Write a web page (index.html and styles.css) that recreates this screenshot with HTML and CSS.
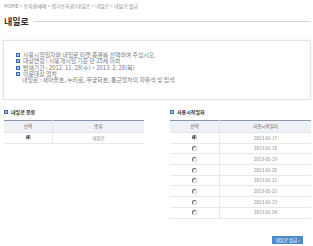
FILE: index.html
```html
<!DOCTYPE html>
<html>
	<head>
		<meta charset="utf-8">
		<link rel="stylesheet" href="styles.css">
	</head>
	<body>
		<div class="page">
			<div class="breadcrumb">HOME &gt; 승차권예매 &gt; 정기승차권/내일로 &gt; 내일로 &gt; 내일로 발급</div>

			<div class="title">
				<h1>내일로</h1>
				<div class="title-line"></div>
			</div>

			<div class="notice">
				<ul>
					<li><i class="mark"></i>사용시작일자와 내일로 티켓 종류를 선택하여 주십시오.</li>
					<li><i class="mark"></i>대상연령 : 사용개시일 기준 만 25세 이하</li>
					<li><i class="mark"></i>발매기간 : 2012. 11. 28(수) ~ 2013. 2. 28(목)</li>
					<li><i class="mark"></i>이용대상 열차</li>
					<li class="sub">내일로 : 새마을호, 누리로, 무궁화호, 통근열차의 자유석 및 입석</li>
				</ul>
			</div>

			<div class="sections">
				<div class="section left">
					<h2><i class="mark"></i>내일로 종류</h2>
					<table class="grid">
						<tr>
							<th class="pick">선택</th>
							<th>종류</th>
						</tr>
						<tr>
							<td><span class="radio on"></span></td>
							<td>내일로</td>
						</tr>
					</table>
				</div>

				<div class="section right">
					<h2><i class="mark"></i>사용시작일자</h2>
					<table class="grid">
						<tr>
							<th class="pick">선택</th>
							<th>사용시작일자</th>
						</tr>
						<tr><td><span class="radio on"></span></td><td>2013-01-17</td></tr>
						<tr><td><span class="radio"></span></td><td>2013-01-18</td></tr>
						<tr><td><span class="radio"></span></td><td>2013-01-19</td></tr>
						<tr><td><span class="radio"></span></td><td>2013-01-20</td></tr>
						<tr><td><span class="radio"></span></td><td>2013-01-21</td></tr>
						<tr><td><span class="radio"></span></td><td>2013-01-22</td></tr>
						<tr><td><span class="radio"></span></td><td>2013-01-23</td></tr>
						<tr><td><span class="radio"></span></td><td>2013-01-24</td></tr>
					</table>
				</div>
			</div>

			<div class="actions">
				<button class="issue">내일로 발급 ›</button>
			</div>
		</div>
	</body>
</html>
```

FILE: styles.css
```css
body {
	margin: 0;
	background: #fff;
	font-family: "Noto Sans CJK KR", "Noto Sans", sans-serif;
	color: #666;
}

.page {
	padding: 2px 2px 0 4px;
}

.breadcrumb {
	font-size: 5px;
	line-height: 7px;
	color: #8a8a8a;
}

.title {
	display: flex;
	align-items: center;
	height: 14px;
	margin-top: 5px;
}

.title h1 {
	margin: 0;
	font-size: 9px;
	font-weight: bold;
	color: #333;
}

.title-line {
	flex: 1;
	height: 1px;
	margin-left: 4px;
	background: #c9d4de;
}

.notice {
	height: 58px;
	margin: 12px 0 0 -1px;
	border: 1px solid #e4e4e4;
	box-shadow: 0 0 2px rgba(0, 0, 0, 0.08);
	padding: 0 0 0 12px;
}

.notice ul {
	list-style: none;
	margin: 0;
	padding: 11px 0 0 0;
}

.notice li {
	display: flex;
	align-items: center;
	font-size: 5.9px;
	line-height: 6.3px;
	color: #7a7a7a;
	white-space: nowrap;
}

.notice li.sub {
	padding-left: 6px;
}

.mark {
	display: inline-block;
	width: 2px;
	height: 2px;
	margin-right: 3px;
	border: 1px solid #3a67ad;
	background: #a9c2e3;
	flex: none;
}

.sections {
	display: flex;
	gap: 26px;
	margin-top: 8px;
}

.section.left {
	width: 140px;
}

.section.right {
	width: 141px;
}

.section h2 {
	display: flex;
	align-items: center;
	margin: 0 0 4px 0;
	font-size: 5px;
	line-height: 8px;
	font-weight: bold;
	color: #333;
}

.grid {
	width: 100%;
	border-collapse: collapse;
	border-top: 1px solid #8797ad;
	font-size: 4.5px;
	color: #808080;
}

.grid th {
	height: 11px;
	padding: 0;
	line-height: 1;
	background: #eef1f5;
	font-weight: normal;
	color: #666;
	border-bottom: 1px solid #e3e6ea;
	border-left: 1px solid #e3e6ea;
}

.grid th:first-child,
.grid td:first-child {
	border-left: none;
}

.left .pick {
	width: 48px;
}

.right .pick {
	width: 49px;
}

.grid td {
	height: 9.7px;
	padding: 0;
	line-height: 1;
	text-align: center;
	border-bottom: 1px solid #e8e8e8;
	border-left: 1px solid #e8e8e8;
}

.radio {
	display: inline-block;
	width: 3px;
	height: 3px;
	border: 1px solid;
	border-color: #666 #d4d4d4 #d4d4d4 #666;
	border-radius: 50%;
	vertical-align: middle;
}

.radio.on {
	background: radial-gradient(circle, #333 45%, #fff 55%);
}

.actions {
	display: flex;
	justify-content: flex-end;
	margin-top: 17px;
	padding-right: 8px;
}

.issue {
	width: 31px;
	height: 8px;
	padding: 0;
	border: none;
	background: #4d8ccc;
	color: #fff;
	font-family: inherit;
	font-size: 4.5px;
	line-height: 8px;
}
```
